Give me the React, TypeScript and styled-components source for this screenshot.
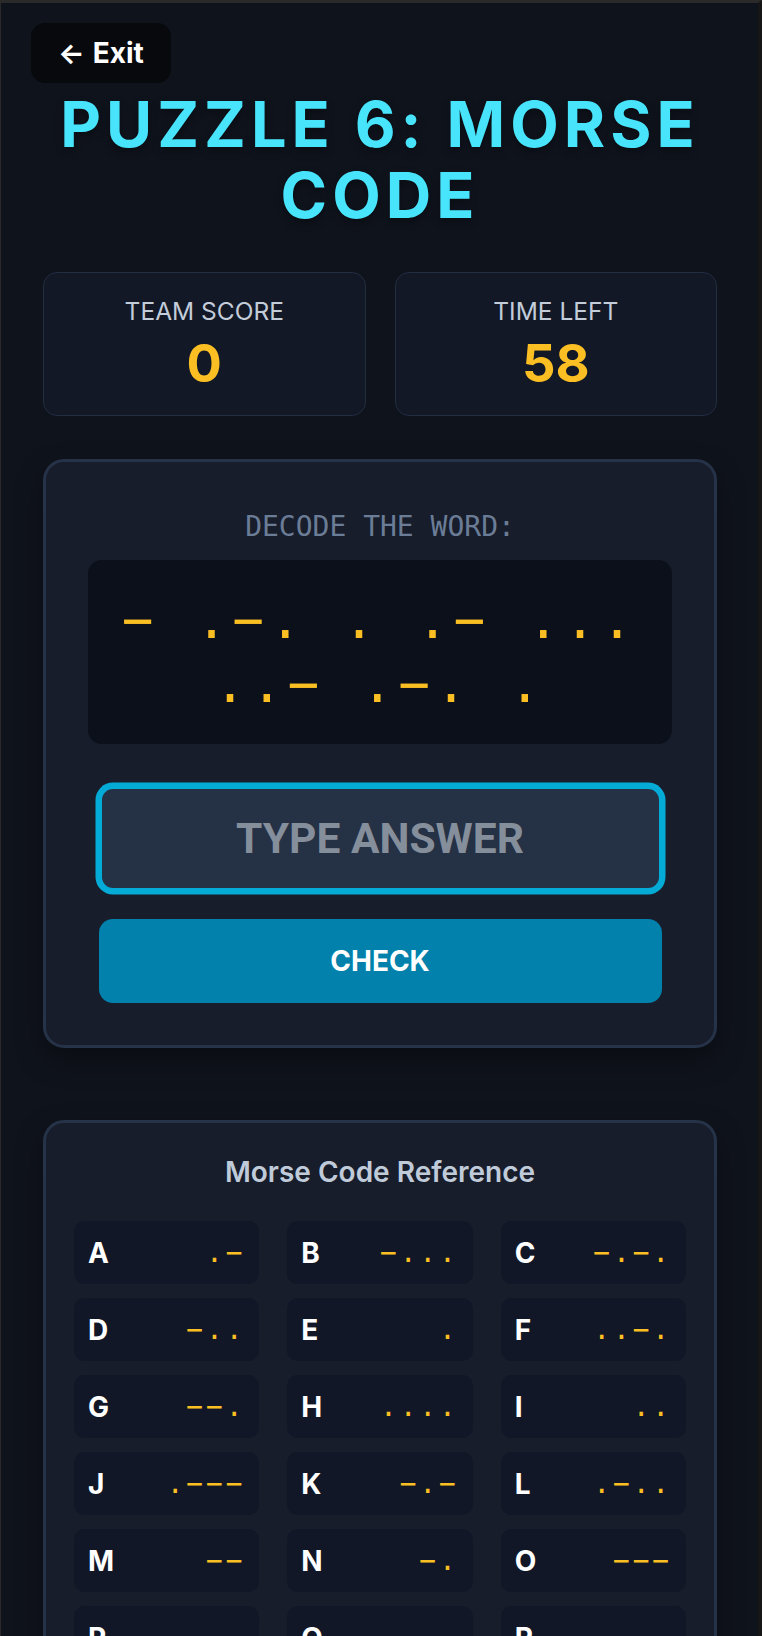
import React from "react";
import styled, { createGlobalStyle } from "styled-components";

const GlobalStyle = createGlobalStyle`
  html, body {
    margin: 0;
    padding: 0;
    background: #0f131c;
  }
  body {
    font-family: Inter, "Noto Sans", sans-serif;
    -webkit-font-smoothing: antialiased;
  }
  *, *::before, *::after {
    box-sizing: border-box;
  }
`;

const Frame = styled.div`
  position: relative;
  min-height: 100vh;
  background: #0f131c;
  border-top: 3px solid #2a2a2a;
  border-left: 1px solid #2a2a2a;
  border-right: 4px solid #161616;
`;

const Page = styled.main`
  display: flex;
  flex-direction: column;
  padding: 86px 41px 60px 42px;
`;

const ExitButton = styled.button`
  position: absolute;
  top: 20px;
  left: 30px;
  height: 60px;
  padding: 0 27px;
  display: flex;
  align-items: center;
  gap: 8px;
  border: none;
  border-radius: 14px;
  background: #08090d;
  color: #ffffff;
  font-family: Inter, sans-serif;
  font-size: 28px;
  font-weight: 700;
  line-height: 42px;
  cursor: pointer;
`;

const Title = styled.h1`
  margin: 0;
  font-family: Inter, sans-serif;
  font-size: 63px;
  line-height: 71px;
  font-weight: 700;
  letter-spacing: 5px;
  text-align: center;
  text-transform: uppercase;
  color: #47e4fc;
  text-shadow: 0 4px 8px rgba(0, 0, 0, 0.35);
`;

const StatsRow = styled.section`
  display: grid;
  grid-template-columns: 1fr 1fr;
  gap: 29px;
  margin-top: 41px;
`;

const StatCard = styled.div`
  display: flex;
  flex-direction: column;
  align-items: center;
  padding: 21px 21px 20px;
  border: 1.75px solid #232d40;
  border-radius: 14px;
  background: #121826;
`;

const StatLabel = styled.div`
  font-size: 24.5px;
  line-height: 35px;
  color: #c3ccd9;
  text-transform: uppercase;
`;

const StatValue = styled.div`
  margin-top: 3px;
  font-size: 52.5px;
  line-height: 63px;
  font-weight: 700;
  color: #fbbf24;
`;

const Card = styled.section<{ $gap: number; $pad: number }>`
  display: flex;
  flex-direction: column;
  align-items: center;
  margin-top: ${(p) => p.$gap}px;
  padding: ${(p) => p.$pad}px;
  border: 3.5px solid #263247;
  border-radius: 21px;
  background: #171d2b;
  box-shadow: 0 12px 28px rgba(0, 0, 0, 0.35);
`;

const DecodeLabel = styled.div`
  margin-top: 2px;
  font-family: "DejaVu Sans Mono", monospace;
  font-size: 28px;
  line-height: 42px;
  color: #6b7c96;
`;

const MorseDisplay = styled.div`
  width: 100%;
  margin-top: 12px;
  padding: 28px;
  border-radius: 14px;
  background: #0b101b;
  font-family: "DejaVu Sans Mono", monospace;
  font-size: 52.5px;
  line-height: 64px;
  letter-spacing: 0.1em;
  color: #fbbf24;
  text-align: center;
`;

const AnswerInput = styled.input`
  width: 563px;
  height: 105px;
  margin-top: 42px;
  padding: 0 20px;
  border: 3.5px solid #04abd6;
  border-radius: 14px;
  box-shadow: 0 0 0 3.5px #04abd6;
  outline: none;
  background: #253145;
  color: #ffffff;
  font-family: Roboto, sans-serif;
  font-size: 42.5px;
  font-weight: 700;
  text-align: center;
  text-transform: uppercase;

  &::placeholder {
    color: #858e9b;
  }
`;

const CheckButton = styled.button`
  width: 563px;
  height: 84px;
  margin-top: 28px;
  border: none;
  border-radius: 14px;
  background: #0181ab;
  color: #ffffff;
  font-family: Inter, sans-serif;
  font-size: 28px;
  font-weight: 700;
  text-transform: uppercase;
  cursor: pointer;
`;

const RefTitle = styled.h2`
  margin: 0 0 28px;
  font-size: 28px;
  line-height: 42px;
  font-weight: 600;
  color: #c0cbda;
  text-align: center;
`;

const RefGrid = styled.div`
  align-self: stretch;
  display: grid;
  grid-template-columns: repeat(3, 1fr);
  column-gap: 28px;
  row-gap: 14px;
`;

const RefItem = styled.div`
  display: flex;
  align-items: center;
  justify-content: space-between;
  height: 63px;
  padding: 0 14px;
  border-radius: 10.5px;
  background: #111726;
`;

const RefLetter = styled.span`
  font-size: 28px;
  line-height: 42px;
  font-weight: 700;
  color: #ffffff;
`;

const RefCode = styled.span`
  font-family: "DejaVu Sans Mono", monospace;
  font-size: 28px;
  line-height: 42px;
  letter-spacing: 0.1em;
  color: #fbbf24;
`;

const MORSE: [string, string][] = [
  ["A", ".-"],
  ["B", "-..."],
  ["C", "-.-."],
  ["D", "-.."],
  ["E", "."],
  ["F", "..-."],
  ["G", "--."],
  ["H", "...."],
  ["I", ".."],
  ["J", ".---"],
  ["K", "-.-"],
  ["L", ".-.."],
  ["M", "--"],
  ["N", "-."],
  ["O", "---"],
  ["P", ".--."],
  ["Q", "--.-"],
  ["R", ".-."],
  ["S", "..."],
  ["T", "-"],
  ["U", "..-"],
  ["V", "...-"],
  ["W", ".--"],
  ["X", "-..-"],
  ["Y", "-.--"],
  ["Z", "--.."],
];

const show = (code: string) => code.replace(/-/g, "\u2212");

const WORD = "TREASURE";
const lookup = Object.fromEntries(MORSE);
const encoded = WORD.split("")
  .map((c) => show(lookup[c]))
  .join(" ");

export default function App() {
  return (
    <>
      <GlobalStyle />
      <Frame>
        <ExitButton type="button">
          <span>←</span>
          <span>Exit</span>
        </ExitButton>
        <Page>
          <Title>Puzzle 6: Morse Code</Title>

          <StatsRow>
            <StatCard>
              <StatLabel>Team Score</StatLabel>
              <StatValue>0</StatValue>
            </StatCard>
            <StatCard>
              <StatLabel>Time Left</StatLabel>
              <StatValue>58</StatValue>
            </StatCard>
          </StatsRow>

          <Card $gap={43} $pad={42}>
            <DecodeLabel>DECODE THE WORD:</DecodeLabel>
            <MorseDisplay>{encoded}</MorseDisplay>
            <AnswerInput placeholder="TYPE ANSWER" />
            <CheckButton type="button">Check</CheckButton>
          </Card>

          <Card $gap={72} $pad={28}>
            <RefTitle>Morse Code Reference</RefTitle>
            <RefGrid>
              {MORSE.map(([letter, code]) => (
                <RefItem key={letter}>
                  <RefLetter>{letter}</RefLetter>
                  <RefCode>{show(code)}</RefCode>
                </RefItem>
              ))}
            </RefGrid>
          </Card>
        </Page>
      </Frame>
    </>
  );
}
